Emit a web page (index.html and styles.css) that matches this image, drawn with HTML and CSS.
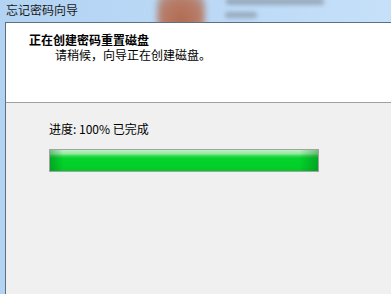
FILE: index.html
```html
<!DOCTYPE html>
<html lang="zh-CN">
<head>
    <meta charset="UTF-8">
    <title>忘记密码向导</title>
    <link rel="stylesheet" href="styles.css">
</head>
<body>
    <div class="frame">
        <!-- 标题栏 (Aero 玻璃) -->
        <div class="titlebar">
            <span class="title">忘记密码向导</span>
            <div class="blur-blob"></div>
            <div class="blur-line one"></div>
            <div class="blur-line two"></div>
        </div>

        <div class="window">
            <div class="client">
                <header class="wizard-header">
                    <h1>正在创建密码重置磁盘</h1>
                    <p>请稍候，向导正在创建磁盘。</p>
                </header>
                <main class="wizard-body">
                    <div class="progress-label">进度: 100% 已完成</div>
                    <div class="progress">
                        <div class="progress-fill" style="width: 100%"></div>
                    </div>
                </main>
            </div>
        </div>
    </div>
</body>
</html>
```

FILE: styles.css
```css
:root {
    --glass: #b9d8f6;
    --frame-line: #5f6f82;
    --panel: #f0f0f0;
    --ui-font: "SimSun", "Noto Sans CJK SC", "DejaVu Sans", sans-serif;
}

html, body {
    margin: 0;
    padding: 0;
}

body {
    width: 391px;
    height: 294px;
    overflow: hidden;
    font-family: var(--ui-font);
    font-size: 12px;
    color: #000;
}

.frame {
    height: 100%;
    display: flex;
    flex-direction: column;
    background: linear-gradient(90deg, #b3d3f3 0%, #bcdaf7 60%, #c6e0f9 100%);
}

/* 标题栏 */
.titlebar {
    position: relative;
    height: 22px;
    flex-shrink: 0;
    overflow: hidden;
}

.titlebar .title {
    position: relative;
    z-index: 1;
    display: block;
    padding: 2px 0 0 6px;
    line-height: 16px;
    font-size: 12px;
    color: #1a1a1a;
}

.blur-blob {
    position: absolute;
    left: 157px;
    top: -6px;
    width: 48px;
    height: 36px;
    border-radius: 10px;
    background: radial-gradient(ellipse at 50% 70%, #b0603f 0%, #b8735a 55%, #a9a7a8 100%);
    filter: blur(3px);
    opacity: 0.9;
}

.blur-line {
    position: absolute;
    background: #7f8a96;
    filter: blur(2px);
    opacity: 0.6;
    border-radius: 3px;
}

.blur-line.one {
    left: 226px;
    top: -2px;
    width: 98px;
    height: 7px;
}

.blur-line.two {
    left: 225px;
    top: 12px;
    width: 32px;
    height: 6px;
}

/* 窗口客户区 */
.window {
    flex: 1;
    display: flex;
    padding-left: 5px;
}

.client {
    flex: 1;
    display: flex;
    flex-direction: column;
    border-left: 1px solid var(--frame-line);
    border-top: 1px solid var(--frame-line);
}

.wizard-header {
    height: 80px;
    flex-shrink: 0;
    background: #fff;
    border-bottom: 1px solid #a0a0a0;
    box-shadow: 0 1px 0 #fff;
    padding: 10px 0 0 23px;
    box-sizing: border-box;
}

.wizard-header h1 {
    margin: 0;
    font-size: 12px;
    font-weight: bold;
    line-height: 14px;
}

.wizard-header p {
    margin: 1px 0 0 26px;
    font-size: 12px;
    line-height: 14px;
}

.wizard-body {
    flex: 1;
    background: var(--panel);
    padding: 19px 0 0 43px;
}

.progress-label {
    line-height: 14px;
    margin-bottom: 13px;
}

.progress {
    width: 268px;
    height: 21px;
    border: 1px solid #a2a2a2;
    background: #e6e6e6;
}

.progress-fill {
    height: 100%;
    background:
        linear-gradient(90deg, rgba(0, 90, 20, 0.35) 0%, rgba(0, 90, 20, 0) 5%, rgba(0, 90, 20, 0) 93%, rgba(0, 90, 20, 0.35) 100%),
        linear-gradient(180deg, #bdf2c2 0%, #93eaa0 18%, #35d955 28%, #05d22c 40%, #02cf28 80%, #05c62a 100%);
}
```
